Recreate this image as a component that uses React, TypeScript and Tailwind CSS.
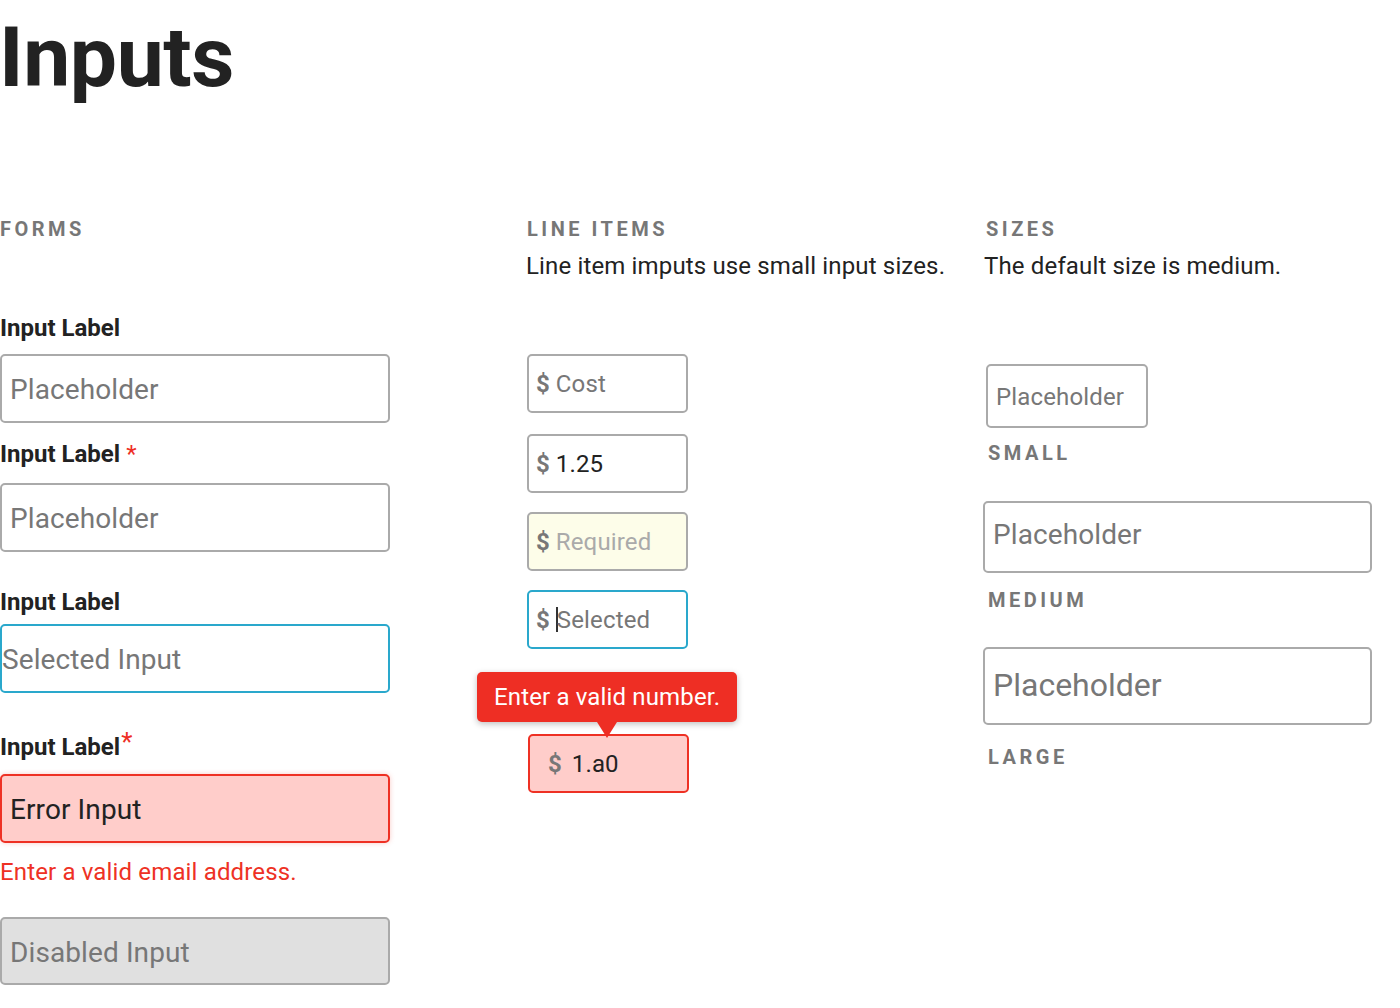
import React from "react";

const box = "border-2 rounded-[5px] outline-none";
const gray = "border-[#aaa] bg-white";
const ph = "placeholder:text-[#777]";

const heading = "text-[20px] leading-[24px] font-bold tracking-[3.5px] text-[#777] uppercase";
const label = "text-[24px] leading-[28px] font-bold text-[#222]";
const desc = "text-[24px] leading-[28px] tracking-[0.15px] text-[#222]";
const big = "w-[390px] h-[69px] pl-[8px] pt-[2px] text-[28px] tracking-[0.1px]";

function Star({ raise = false }: { raise?: boolean }) {
  return (
    <span
      className={`font-normal text-[#ee2e24] relative leading-none ${raise ? "-top-[4px] text-[26px] ml-[1px]" : "ml-[6px]"}`}
    >
      *
    </span>
  );
}

// small "$" line item input
function LineItem({
  placeholder,
  value,
  className = "",
  caret = false,
  phClass = "placeholder:text-[#777]",
}: {
  placeholder?: string;
  value?: string;
  className?: string;
  caret?: boolean;
  phClass?: string;
}) {
  return (
    <div className={`${box} flex items-center w-[161px] h-[59px] pl-[7px] gap-[6px] ${className}`}>
      <span className="text-[24px] font-bold text-[#777] leading-[28px]">$</span>
      {caret && <span className="w-[2px] h-[25px] bg-[#333] shrink-0" />}
      <input
        readOnly
        placeholder={placeholder}
        defaultValue={value}
        className={`flex-1 min-w-0 bg-transparent outline-none text-[24px] leading-[28px] tracking-[0.15px] text-[#222] ${phClass} ${caret ? "-ml-[7px]" : ""}`}
      />
    </div>
  );
}

export default function App() {
  return (
    <div className="min-h-screen bg-white text-[#222] font-['Roboto',sans-serif]">
      <h1 className="mt-[16px] text-[84px] leading-[84px] font-bold text-[#222] -ml-[1px] tracking-[-0.4px]">
        Inputs
      </h1>

      <div className="mt-[117px] grid grid-cols-[526px_457px_1fr]">
        {/* Forms */}
        <div className="flex flex-col">
          <div className={heading}>Forms</div>

          <label className={`${label} mt-[73px]`}>Input Label</label>
          <input readOnly placeholder="Placeholder" className={`${box} ${gray} ${ph} ${big} mt-[12px]`} />

          <label className={`${label} mt-[17px]`}>
            Input Label<Star />
          </label>
          <input readOnly placeholder="Placeholder" className={`${box} ${gray} ${ph} ${big} mt-[15px]`} />

          <label className={`${label} mt-[36px]`}>Input Label</label>
          <input
            readOnly
            placeholder="Selected Input"
            className={`${box} ${ph} ${big} border-[#2aa8cc] bg-white mt-[8px] !pl-0`}
          />

          <label className={`${label} mt-[40px]`}>
            Input Label<Star raise />
          </label>
          <input
            readOnly
            defaultValue="Error Input"
            className={`${box} ${big} border-[#ee3124] bg-[#ffcdca] text-[#222] shadow-[0_0_5px_rgba(238,49,36,0.25)] mt-[13px]`}
          />
          <p className="mt-[15px] text-[24px] leading-[28px] tracking-[0.15px] text-[#ee3124]">
            Enter a valid email address.
          </p>

          <input
            disabled
            placeholder="Disabled Input"
            className={`${box} ${ph} ${big} border-[#aaa] bg-[#e0e0e0] mt-[31px] !h-[68px]`}
          />
        </div>

        {/* Line items */}
        <div className="flex flex-col">
          <div className={`${heading} ml-[1px]`}>Line Items</div>
          <p className={`${desc} mt-[11px]`}>Line item imputs use small input sizes.</p>

          <LineItem placeholder="Cost" className={`${gray} mt-[74px] ml-[1px]`} />
          <LineItem value="1.25" className={`${gray} mt-[21px] ml-[1px]`} />
          <LineItem
            placeholder="Required"
            phClass="placeholder:text-[#aaa]"
            className="border-[#aaa] bg-[#fdfde9] mt-[19px] ml-[1px]"
          />
          <LineItem placeholder="Selected" caret className="border-[#2aa8cc] bg-white mt-[19px] ml-[1px]" />

          <div className="relative mt-[85px] ml-[2px] w-[161px]">
            <div className="absolute -top-[62px] -left-[51px] w-[260px] h-[50px] rounded-[5px] bg-[#ee2e24] text-white text-[24px] leading-[50px] tracking-[0.15px] pl-[17px] shadow-[0_2px_6px_rgba(0,0,0,0.25)] z-10">
              Enter a valid number.
              <span className="absolute top-full left-1/2 -translate-x-1/2 w-0 h-0 border-x-[10px] border-x-transparent border-t-[16px] border-t-[#ee2e24]" />
            </div>
            <LineItem value="1.a0" className="border-[#ee3124] bg-[#ffcdca] pl-[18px] gap-[10px]" />
          </div>
        </div>

        {/* Sizes */}
        <div className="flex flex-col">
          <div className={`${heading} ml-[3px]`}>Sizes</div>
          <p className={`${desc} mt-[11px] ml-[1px]`}>The default size is medium.</p>

          <input
            readOnly
            placeholder="Placeholder"
            className={`${box} ${gray} ${ph} mt-[84px] ml-[3px] w-[162px] h-[64px] pl-[8px] pt-[2px] text-[24px] tracking-[0.15px]`}
          />
          <div className={`${heading} mt-[13px] ml-[5px]`}>Small</div>

          <input
            readOnly
            placeholder="Placeholder"
            className={`${box} ${gray} ${ph} mt-[36px] w-[389px] h-[72px] pl-[8px] pb-[5px] text-[28px] tracking-[0.1px]`}
          />
          <div className={`${heading} mt-[15px] ml-[5px]`}>Medium</div>

          <input
            readOnly
            placeholder="Placeholder"
            className={`${box} ${gray} ${ph} mt-[35px] w-[389px] h-[78px] pl-[8px] pb-[2px] text-[32px]`}
          />
          <div className={`${heading} mt-[20px] ml-[5px]`}>Large</div>
        </div>
      </div>
    </div>
  );
}
